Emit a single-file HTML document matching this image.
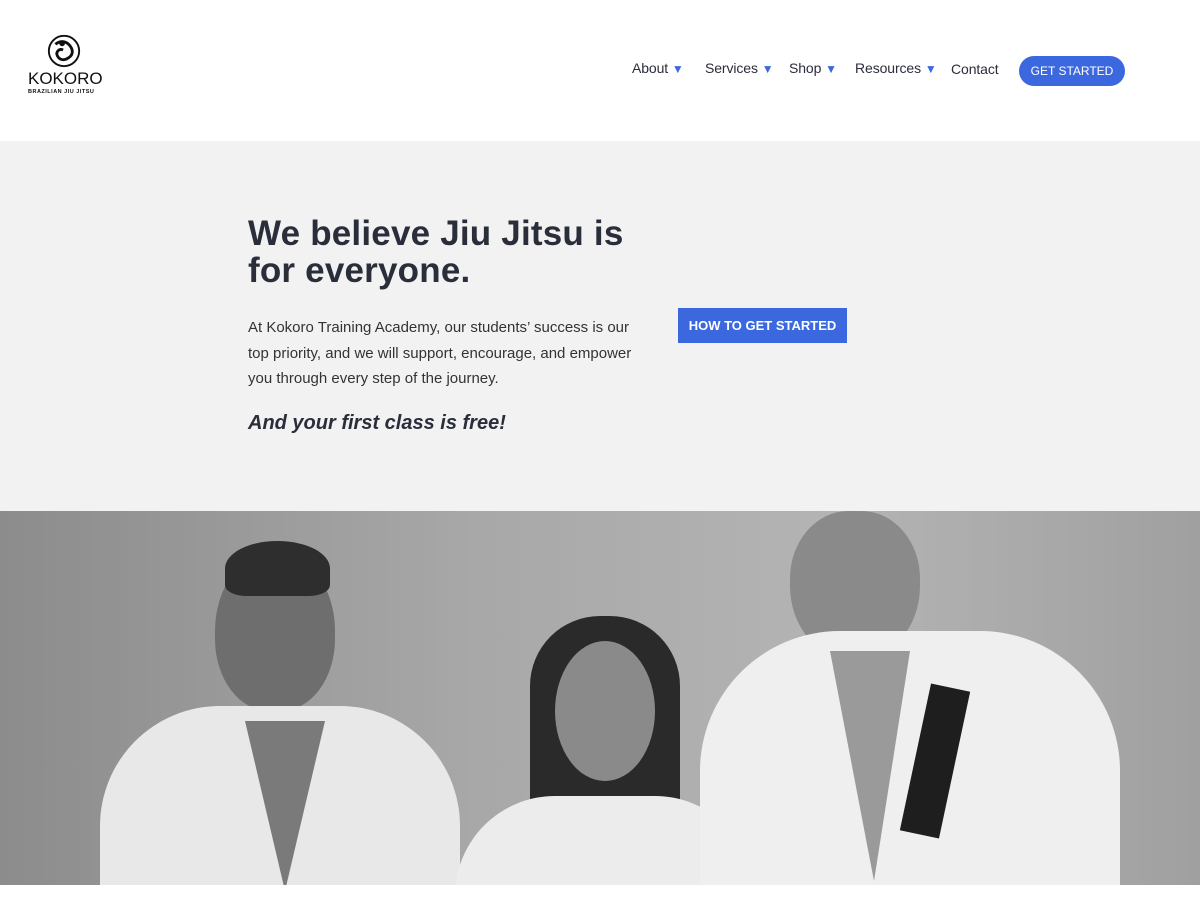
<!DOCTYPE html>
<html><head><meta charset="utf-8"><style>
*{margin:0;padding:0;box-sizing:border-box}
body{width:1200px;height:900px;overflow:hidden;background:#fff;font-family:"Liberation Sans",sans-serif;color:#2a2d3a;position:relative}
.nav a{position:absolute;top:60px;font-size:14px;color:#2a2d3a;text-decoration:none;font-weight:normal;letter-spacing:-0.1px}
.tri{color:#3b68de;font-size:12px}
.hero{position:absolute;top:141px;left:0;width:1200px;height:370px;background:#f2f2f2}
.photo{position:absolute;top:511px;left:0;width:1200px;height:374px;overflow:hidden;background:linear-gradient(90deg,#8c8c8c,#a8a8a8 40%,#b4b4b4 70%,#a0a0a0)}
.b{position:absolute}
</style></head><body>
<svg class="b" style="left:46px;top:33px" width="36" height="36" viewBox="0 0 38 38"><circle cx="19" cy="19" r="16" fill="none" stroke="#111" stroke-width="2"/><path d="M10 12c4-4 10-4 14 0s6 10 0 14-10 2-12-2 2-8 6-6" fill="none" stroke="#111" stroke-width="3"/><circle cx="17" cy="11" r="3" fill="#111"/></svg>
<div class="b" style="left:28px;top:69px;font-size:17px;letter-spacing:0px;color:#111">KOKORO</div>
<div class="b" style="left:28px;top:89px;font-size:5.5px;font-weight:bold;letter-spacing:0.5px;color:#111">BRAZILIAN JIU JITSU</div>
<div class="nav">
<a style="left:632px">About <span class="tri">▼</span></a>
<a style="left:705px">Services <span class="tri">▼</span></a>
<a style="left:789px">Shop <span class="tri">▼</span></a>
<a style="left:855px">Resources <span class="tri">▼</span></a>
<a style="left:951px;top:61px">Contact</a>
</div>
<div class="b" style="left:1019px;top:56px;width:106px;height:30px;border-radius:15px;background:#3b68de;color:#fff;font-size:12px;text-align:center;line-height:30px">GET STARTED</div>
<div class="hero">
<div class="b" style="left:248px;top:74px;font-size:35px;font-weight:bold;line-height:37px;color:#2a2d3a;letter-spacing:0.2px">We believe Jiu Jitsu is<br>for everyone.</div>
<div class="b" style="left:248px;top:174px;width:400px;font-size:15px;line-height:25.5px;color:#333">At Kokoro Training Academy, our students’ success is our top priority, and we will support, encourage, and empower you through every step of the journey.</div>
<div class="b" style="left:248px;top:271px;font-size:20px;font-weight:bold;font-style:italic;color:#2a2d3a">And your first class is free!</div>
<div class="b" style="left:678px;top:167px;width:169px;height:35px;background:#3b68de;color:#fff;font-size:13px;font-weight:bold;text-align:center;line-height:35px">HOW TO GET STARTED</div>
</div>
<div class="photo">
<div class="b" style="left:215px;top:40px;width:120px;height:160px;border-radius:50% 50% 45% 45%;background:#6e6e6e"></div>
<div class="b" style="left:225px;top:30px;width:105px;height:55px;border-radius:50% 50% 20% 20%;background:#2e2e2e"></div>
<div class="b" style="left:100px;top:195px;width:360px;height:190px;border-radius:120px 120px 0 0;background:#e8e8e8"></div>
<div class="b" style="left:245px;top:210px;width:80px;height:170px;background:#7a7a7a;clip-path:polygon(0 0,100% 0,50% 100%)"></div>
<div class="b" style="left:530px;top:105px;width:150px;height:270px;border-radius:70px 70px 0 0;background:#2a2a2a"></div>
<div class="b" style="left:555px;top:130px;width:100px;height:140px;border-radius:50%;background:#8a8a8a"></div>
<div class="b" style="left:455px;top:285px;width:300px;height:100px;border-radius:100px 100px 0 0;background:#ececec"></div>
<div class="b" style="left:790px;top:0;width:130px;height:150px;border-radius:45% 45% 50% 50%;background:#8a8a8a"></div>
<div class="b" style="left:700px;top:120px;width:420px;height:260px;border-radius:140px 140px 0 0;background:#efefef"></div>
<div class="b" style="left:830px;top:140px;width:80px;height:230px;background:#9a9a9a;clip-path:polygon(0 0,100% 0,55% 100%)"></div>
<div class="b" style="left:915px;top:175px;width:40px;height:150px;background:#1e1e1e;transform:rotate(12deg)"></div>
</div>
</body></html>
